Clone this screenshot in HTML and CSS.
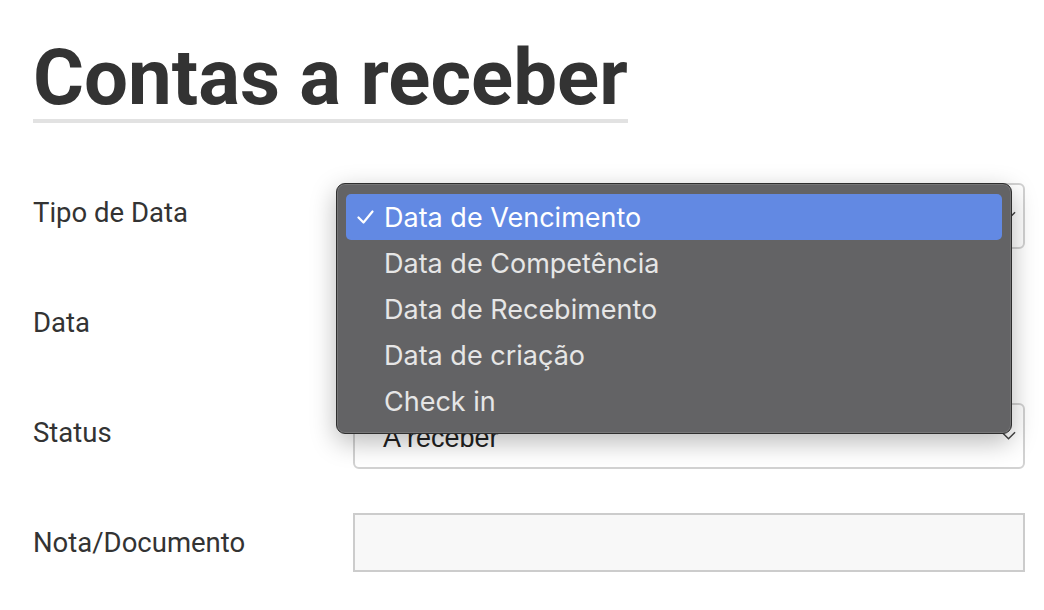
FILE: index.html
```html
<!DOCTYPE html>
<html lang="pt">
<head>
<meta charset="utf-8">
<link rel="stylesheet" href="styles.css">
</head>
<body>
<main class="page">
  <h1 class="title">Contas a receber</h1>
  <form class="form">
    <div class="row">
      <label class="label">Tipo de Data</label>
      <div class="field">
        <div class="select"><span class="select-text"></span>
          <svg class="chev" viewBox="0 0 16 10"><polyline points="1,1 8,8 15,1"/></svg>
        </div>
        <ul class="menu">
          <li class="item active"><span class="check"><svg class="tick" viewBox="0 0 17 14"><polyline points="1.5,7.5 6.5,12.5 15.5,1.5"/></svg></span>Data de Vencimento</li>
          <li class="item"><span class="check"></span>Data de Competência</li>
          <li class="item"><span class="check"></span>Data de Recebimento</li>
          <li class="item"><span class="check"></span>Data de criação</li>
          <li class="item"><span class="check"></span>Check in</li>
        </ul>
      </div>
    </div>
    <div class="row">
      <label class="label">Data</label>
      <div class="field">
        <div class="select select-short"></div>
      </div>
    </div>
    <div class="row">
      <label class="label">Status</label>
      <div class="field">
        <div class="select"><span class="select-text">A receber</span>
          <svg class="chev" viewBox="0 0 16 10"><polyline points="1,1 8,8 15,1"/></svg>
        </div>
      </div>
    </div>
    <div class="row">
      <label class="label">Nota/Documento</label>
      <div class="field">
        <div class="input"></div>
      </div>
    </div>
  </form>
</main>
</body>
</html>
```
FILE: styles.css
```css
html, body {
  margin: 0;
  padding: 0;
  background: #ffffff;
}
.page {
  padding: 38px 19px 0 33px;
  font-family: Roboto, "Liberation Sans", sans-serif;
  color: #333333;
}
.title {
  display: inline-block;
  margin: 0;
  font-size: 78px;
  font-weight: 700;
  line-height: 78px;
  padding-top: 1px;
  padding-bottom: 2px;
  border-bottom: 4px solid #e2e2e2;
  color: #333333;
}
.form {
  margin-top: 60px;
  display: flex;
  flex-direction: column;
  gap: 44px;
}
.row {
  display: grid;
  grid-template-columns: 320px 672px;
  align-items: start;
}
.label {
  font-size: 27.5px;
  line-height: 33px;
  margin-top: 13px;
  color: #333333;
}
.field {
  position: relative;
}
.select {
  box-sizing: border-box;
  height: 66px;
  border: 2px solid #d2d2d2;
  border-radius: 6px;
  background: #ffffff;
  display: flex;
  align-items: center;
  padding: 0 7px 0 28px;
  font-family: "Liberation Sans", Arial, sans-serif;
  font-size: 27px;
  color: #222222;
}
.select-short {
  width: 600px;
}
.select-text {
  flex: 1;
  padding-top: 4px;
}
.chev {
  width: 15px;
  height: 10px;
  fill: none;
  stroke: #444444;
  stroke-width: 1.6;
}
.input {
  box-sizing: border-box;
  height: 59px;
  border: 2px solid #cccccc;
  background: #f8f8f8;
}
.menu {
  position: absolute;
  z-index: 10;
  left: -17px;
  top: 0;
  box-sizing: border-box;
  width: 676px;
  margin: 0;
  padding: 10px 9px 9px 9px;
  list-style: none;
  background: #636365;
  border: 1px solid #2e2e2e;
  border-radius: 9px;
  box-shadow: 0 8px 26px rgba(0, 0, 0, 0.28), inset 0 0 0 1px rgba(255, 255, 255, 0.12);
  font-family: Inter, "Noto Sans", sans-serif;
  font-size: 27px;
  color: #e6e6e6;
}
.item {
  height: 46px;
  display: flex;
  align-items: center;
  padding-left: 11px;
  border-radius: 5px;
}
.item.active {
  background: #6289e3;
  color: #ffffff;
}
.check {
  width: 27px;
  height: 14px;
  display: inline-flex;
  align-items: center;
}
.tick {
  width: 17px;
  height: 14px;
  fill: none;
  stroke: #ffffff;
  stroke-width: 2.2;
  stroke-linecap: round;
  stroke-linejoin: round;
}
```
